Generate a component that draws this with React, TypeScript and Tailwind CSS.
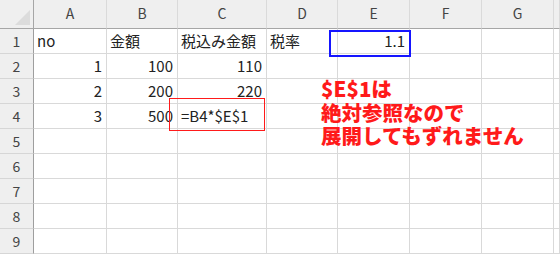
import React from 'react'

const COLS = ['A', 'B', 'C', 'D', 'E', 'F', 'G', '']

type Cell = { v: string; num?: boolean }

// sheet contents, keyed by row number
const DATA: Record<number, Cell[]> = {
  1: [{ v: 'no' }, { v: '金額' }, { v: '税込み金額' }, { v: '税率' }, { v: '1.1', num: true }],
  2: [{ v: '1', num: true }, { v: '100', num: true }, { v: '110', num: true }],
  3: [{ v: '2', num: true }, { v: '200', num: true }, { v: '220', num: true }],
  4: [{ v: '3', num: true }, { v: '500', num: true }, { v: '=B4*$E$1' }],
}

const ROWS = [1, 2, 3, 4, 5, 6, 7, 8, 9]

const font = { fontFamily: '"Noto Sans CJK JP", "Noto Sans", sans-serif' }

export default function App() {
  return (
    <div className="relative w-[560px] h-[254px] overflow-hidden bg-white" style={font}>
      <div className="grid grid-cols-[34px_73px_71px_89px_71px_72px_72px_72px_1fr] grid-rows-[29px_repeat(9,25px)]">
        {/* corner */}
        <div className="relative bg-[#efefef] border-r border-r-[#a6a6a6] border-b border-b-[#a6a6a6]">
          <svg className="absolute left-[15px] top-[10px]" width="15" height="15" viewBox="0 0 15 15">
            <polygon points="15,0 15,15 0,15" fill="#dcdcdc" />
          </svg>
        </div>
        {COLS.map((c, i) => (
          <div
            key={c + i}
            className="flex items-center justify-center bg-[#efefef] border-r border-r-[#dadada] border-b border-b-[#a6a6a6] text-[14px] text-[#444] pb-[2px]"
          >
            {c}
          </div>
        ))}

        {ROWS.map((r) => (
          <React.Fragment key={r}>
            <div className="flex items-center justify-center bg-[#efefef] border-r border-r-[#9e9e9e] border-b border-b-[#d6d6d6] text-[14px] text-[#444]">
              {r}
            </div>
            {COLS.map((c, i) => {
              const cell = DATA[r]?.[i]
              return (
                <div
                  key={c + i}
                  className={`flex items-center whitespace-nowrap border-r border-r-[#d9d9d9] border-b border-b-[#d9d9d9] text-[15px] text-[#222] ${
                    cell?.num ? 'justify-end pr-[4px]' : 'justify-start pl-[3px]'
                  }`}
                >
                  {cell?.v}
                </div>
              )
            })}
          </React.Fragment>
        ))}
      </div>

      {/* highlight boxes */}
      <div className="absolute left-[329px] top-[30px] w-[82px] h-[27px] border-2 border-[#1515ff]" />
      <div className="absolute left-[169px] top-[98px] w-[96px] h-[33px] border-[1.5px] border-[#ff1a1a]" />

      {/* note */}
      <div className="absolute left-[321px] top-[77px] flex flex-col text-[20.5px] leading-[23.5px] font-black text-[#ff1a1a]">
        <span>$E$1は</span>
        <span>絶対参照なので</span>
        <span>展開してもずれません</span>
      </div>
    </div>
  )
}
